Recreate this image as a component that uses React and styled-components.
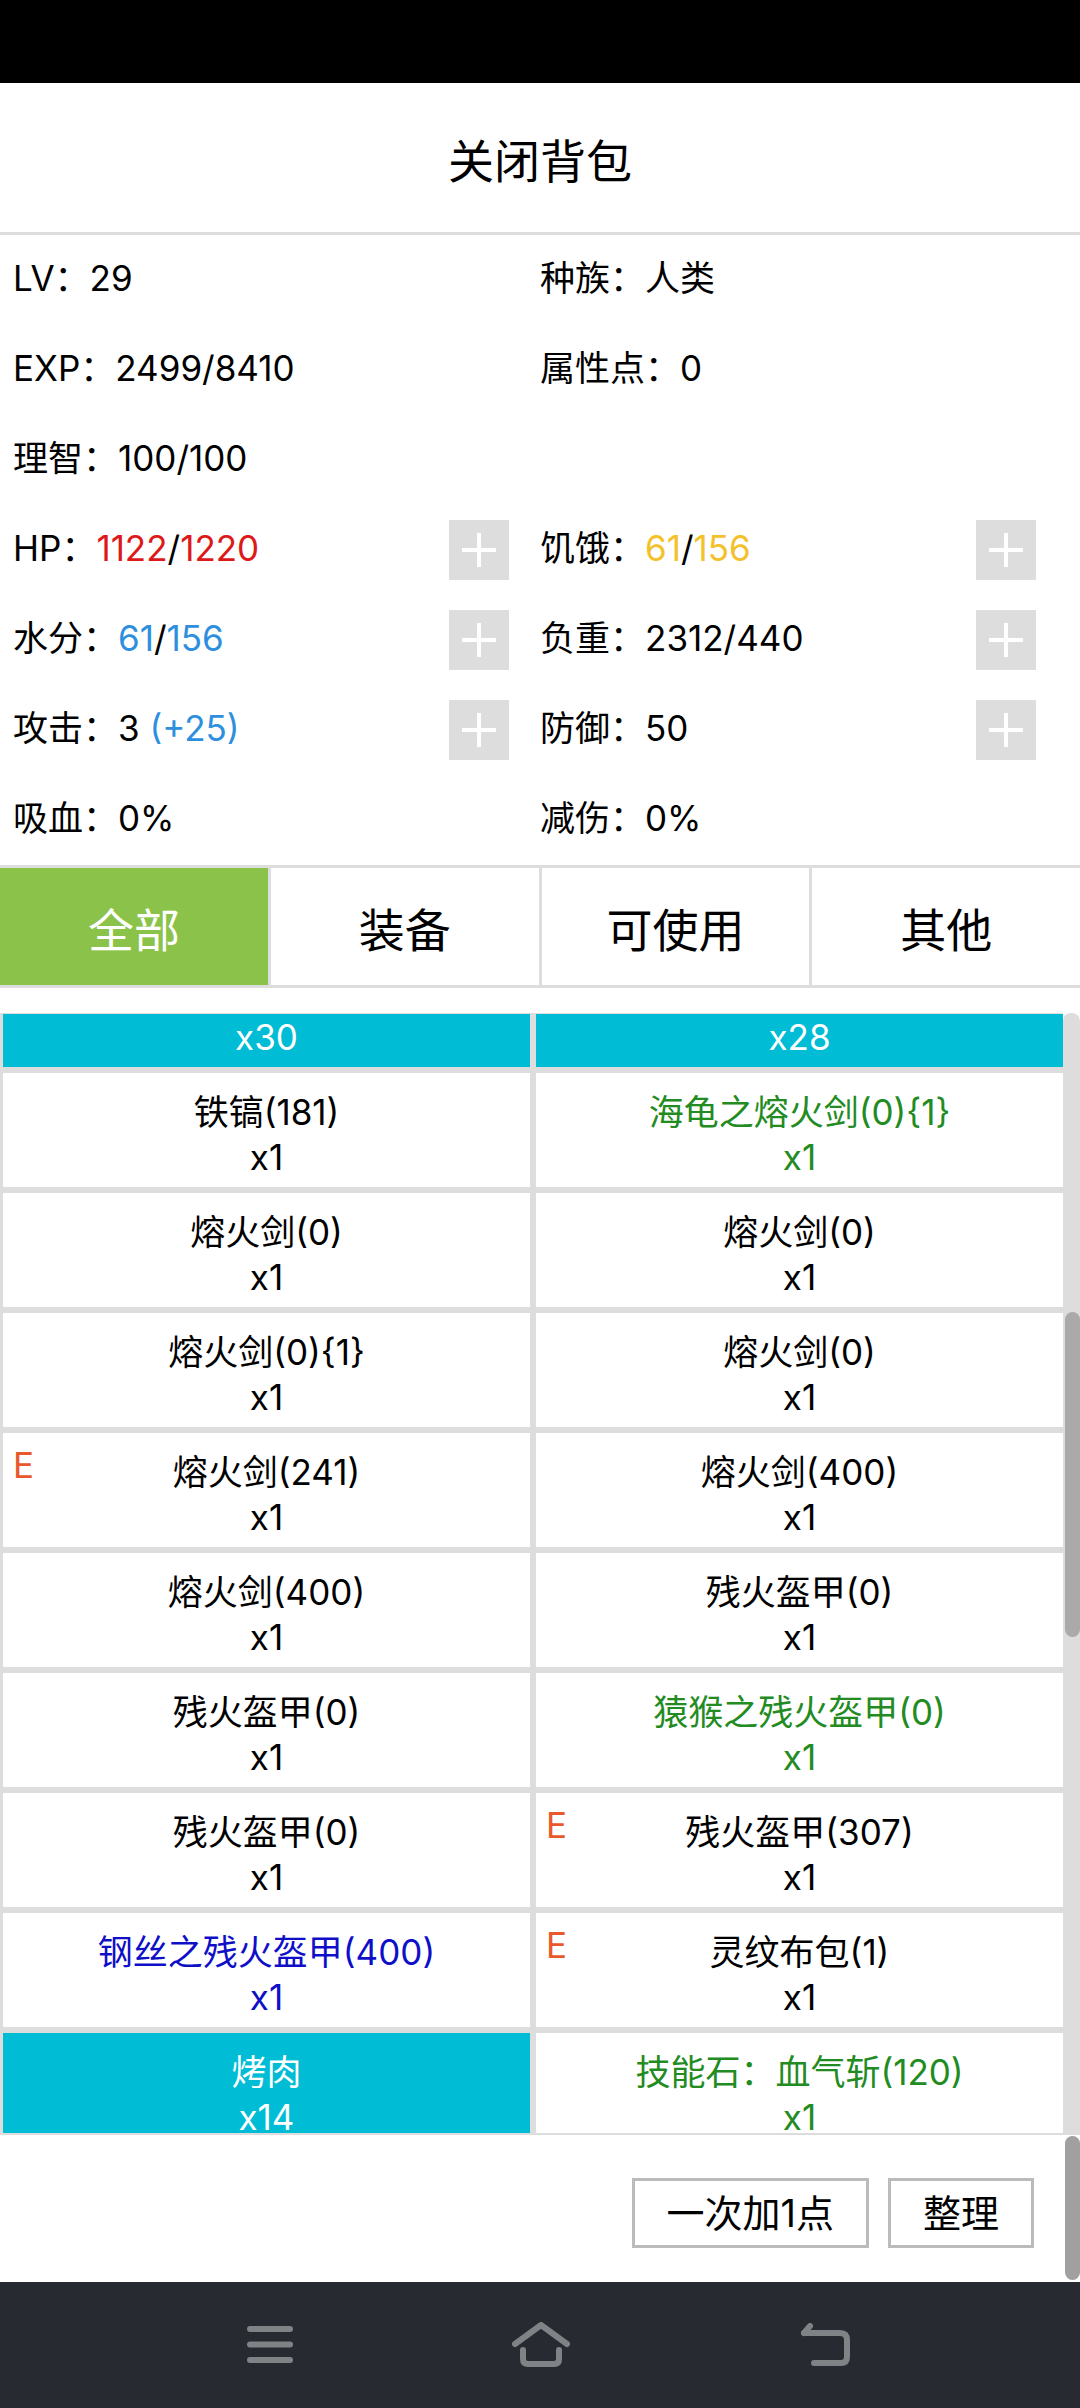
import React from 'react';
import styled, { createGlobalStyle } from 'styled-components';

const GlobalStyle = createGlobalStyle`
  html, body {
    margin: 0;
    padding: 0;
    background: #fff;
  }
  body {
    font-family: Inter, "Noto Sans CJK SC", sans-serif;
    color: #000;
  }
  * { box-sizing: border-box; }
`;

const Screen = styled.div`
  width: 1080px;
  height: 2408px;
  display: flex;
  flex-direction: column;
  overflow: hidden;
  background: #fff;
`;

const StatusBar = styled.div`
  height: 83px;
  flex-shrink: 0;
  background: #000;
`;

const Header = styled.header`
  height: 152px;
  flex-shrink: 0;
  display: flex;
  align-items: center;
  justify-content: center;
  border-bottom: 3px solid #ddd;
  font-size: 46px;
`;

const StatGrid = styled.section`
  display: grid;
  grid-template-columns: 1fr 1fr;
  grid-auto-rows: 90px;
  padding: 0 13px;
  font-size: 35px;
  flex-shrink: 0;
`;

const StatCell = styled.div`
  display: flex;
  align-items: center;
  justify-content: space-between;
  padding: 0 31px 0 0;
  white-space: nowrap;
`;

const StatText = styled.span`
  margin-bottom: 9px;
`;

const Value = styled.span`
  color: ${({ $color }) => $color || 'inherit'};
`;

const PlusButton = styled.button`
  position: relative;
  width: 60px;
  height: 60px;
  padding: 0;
  border: none;
  background: #ddd;

  &::before,
  &::after {
    content: '';
    position: absolute;
    left: 50%;
    top: 50%;
    background: #fff;
    transform: translate(-50%, -50%);
  }
  &::before { width: 34px; height: 4px; }
  &::after { width: 4px; height: 34px; }
`;

const Tabs = styled.nav`
  height: 123px;
  flex-shrink: 0;
  display: grid;
  grid-template-columns: repeat(4, 1fr);
  column-gap: 3px;
  background: #ddd;
  border-top: 3px solid #ddd;
  border-bottom: 3px solid #ddd;
  margin-bottom: 25px;
`;

const Tab = styled.div`
  display: flex;
  align-items: center;
  justify-content: center;
  font-size: 46px;
  background: ${({ $active }) => ($active ? '#8bc34a' : '#fff')};
  color: ${({ $active }) => ($active ? '#fff' : '#000')};
`;

const ListArea = styled.div`
  height: 1122px;
  flex-shrink: 0;
  display: flex;
`;

const ListViewport = styled.div`
  flex: 1;
  overflow: hidden;
  background: #ddd;
  border-bottom: 2px solid #ddd;
`;

const ItemGrid = styled.div`
  display: grid;
  grid-template-columns: 1fr 1fr;
  gap: 6px;
  padding: 1px 0 0 3px;
`;

const tones = {
  plain: { bg: '#fff', fg: '#000' },
  green: { bg: '#fff', fg: '#228b22' },
  blue: { bg: '#fff', fg: '#0f0fc8' },
  cyan: { bg: '#00bcd4', fg: '#fff' },
};

const Cell = styled.div`
  position: relative;
  height: ${({ $tail }) => ($tail ? '53px' : '114px')};
  display: flex;
  flex-direction: column;
  align-items: center;
  justify-content: ${({ $tail }) => ($tail ? 'flex-start' : 'center')};
  padding-top: ${({ $tail }) => ($tail ? '1px' : '10px')};
  background: ${({ $tone }) => tones[$tone].bg};
  color: ${({ $tone }) => tones[$tone].fg};
  font-size: 35px;
  line-height: 45px;
  white-space: nowrap;
`;

const EquipMark = styled.span`
  position: absolute;
  left: 10px;
  top: 15px;
  font-size: 35px;
  line-height: 1;
  color: #e8582a;
`;

const Track = styled.div`
  width: 17px;
  display: flex;
  flex-direction: column;
  background: #ddd;
  border-radius: 8px 8px 0 0;
`;

const Thumb = styled.div`
  margin: ${({ $top }) => $top}px 0 0 2px;
  height: ${({ $height }) => $height}px;
  border-radius: 8px;
  background: #aaa;
`;

const Footer = styled.footer`
  position: relative;
  height: 147px;
  flex-shrink: 0;
  display: flex;
  justify-content: flex-end;
  align-items: flex-start;
  gap: 19px;
  padding: 43px 46px 0 0;
`;

const ActionButton = styled.button`
  height: 70px;
  padding: 0 32px;
  border: 3px solid #bbb;
  background: #fff;
  color: #000;
  font-family: inherit;
  font-size: 38px;
  line-height: 1;
`;

const PageThumb = styled.div`
  position: absolute;
  right: 0;
  top: 1px;
  bottom: 2px;
  width: 15px;
  border-radius: 8px;
  background: #a0a0a0;
`;

const NavBar = styled.div`
  height: 126px;
  flex-shrink: 0;
  display: flex;
  align-items: center;
  padding-left: 247px;
  background: #272a30;
`;

const NavIcon = styled.svg`
  margin-left: ${({ $gap }) => $gap || 0}px;
  fill: none;
  stroke: #808386;
  stroke-width: 6;
  stroke-linecap: round;
  stroke-linejoin: round;
`;

const stats = [
  [{ label: 'LV', parts: [['29']] }, { label: '种族', parts: [['人类']] }],
  [{ label: 'EXP', parts: [['2499/8410']] }, { label: '属性点', parts: [['0']] }],
  [{ label: '理智', parts: [['100/100']] }, null],
  [
    { label: 'HP', parts: [['1122', '#de1818'], ['/'], ['1220', '#de1818']], plus: true },
    { label: '饥饿', parts: [['61', '#f4c12b'], ['/'], ['156', '#f4c12b']], plus: true },
  ],
  [
    { label: '水分', parts: [['61', '#2d8fdd'], ['/'], ['156', '#2d8fdd']], plus: true },
    { label: '负重', parts: [['2312/440']], plus: true },
  ],
  [
    { label: '攻击', parts: [['3 '], ['(+25)', '#2d8fdd']], plus: true },
    { label: '防御', parts: [['50']], plus: true },
  ],
  [{ label: '吸血', parts: [['0%']] }, { label: '减伤', parts: [['0%']] }],
];

const tabs = ['全部', '装备', '可使用', '其他'];

const items = [
  { count: 'x30', tone: 'cyan', tail: true },
  { count: 'x28', tone: 'cyan', tail: true },
  { name: '铁镐(181)' },
  { name: '海龟之熔火剑(0){1}', tone: 'green' },
  { name: '熔火剑(0)' },
  { name: '熔火剑(0)' },
  { name: '熔火剑(0){1}' },
  { name: '熔火剑(0)' },
  { name: '熔火剑(241)', equipped: true },
  { name: '熔火剑(400)' },
  { name: '熔火剑(400)' },
  { name: '残火盔甲(0)' },
  { name: '残火盔甲(0)' },
  { name: '猿猴之残火盔甲(0)', tone: 'green' },
  { name: '残火盔甲(0)' },
  { name: '残火盔甲(307)', equipped: true },
  { name: '钢丝之残火盔甲(400)', tone: 'blue' },
  { name: '灵纹布包(1)', equipped: true },
  { name: '烤肉', count: 'x14', tone: 'cyan' },
  { name: '技能石：血气斩(120)', tone: 'green' },
];

function StatItem({ stat }) {
  if (!stat) return <StatCell />;
  return (
    <StatCell>
      <StatText>
        {stat.label}：
        {stat.parts.map(([text, color], i) => (
          <Value key={i} $color={color}>{text}</Value>
        ))}
      </StatText>
      {stat.plus && <PlusButton aria-label="加点" />}
    </StatCell>
  );
}

export default function App() {
  return (
    <Screen>
      <GlobalStyle />
      <StatusBar />
      <Header>关闭背包</Header>

      <StatGrid>
        {stats.flat().map((stat, i) => (
          <StatItem key={i} stat={stat} />
        ))}
      </StatGrid>

      <Tabs>
        {tabs.map((t, i) => (
          <Tab key={t} $active={i === 0}>{t}</Tab>
        ))}
      </Tabs>

      <ListArea>
        <ListViewport>
          <ItemGrid>
            {items.map((item, i) => (
              <Cell key={i} $tone={item.tone || 'plain'} $tail={item.tail}>
                {item.equipped && <EquipMark>E</EquipMark>}
                {item.name && <div>{item.name}</div>}
                <div>{item.count || 'x1'}</div>
              </Cell>
            ))}
          </ItemGrid>
        </ListViewport>
        <Track>
          <Thumb $top={299} $height={325} />
        </Track>
      </ListArea>

      <Footer>
        <ActionButton>一次加1点</ActionButton>
        <ActionButton>整理</ActionButton>
        <PageThumb />
      </Footer>

      <NavBar>
        <NavIcon width="46" height="38" viewBox="0 0 46 38">
          <path d="M3 3H43M3 18.5H43M3 34H43" />
        </NavIcon>
        <NavIcon $gap={219} width="58" height="46" viewBox="0 0 58 46">
          <path d="M3 22L29 3L55 22" />
          <path d="M11 28V37Q11 42 16 42H42Q47 42 47 37V28" />
        </NavIcon>
        <NavIcon $gap={230} width="52" height="44" viewBox="0 0 52 44">
          <path d="M10 3L4 10" />
          <path d="M4 10H40Q47 10 47 17V34Q47 40 41 40H14" />
        </NavIcon>
      </NavBar>
    </Screen>
  );
}
